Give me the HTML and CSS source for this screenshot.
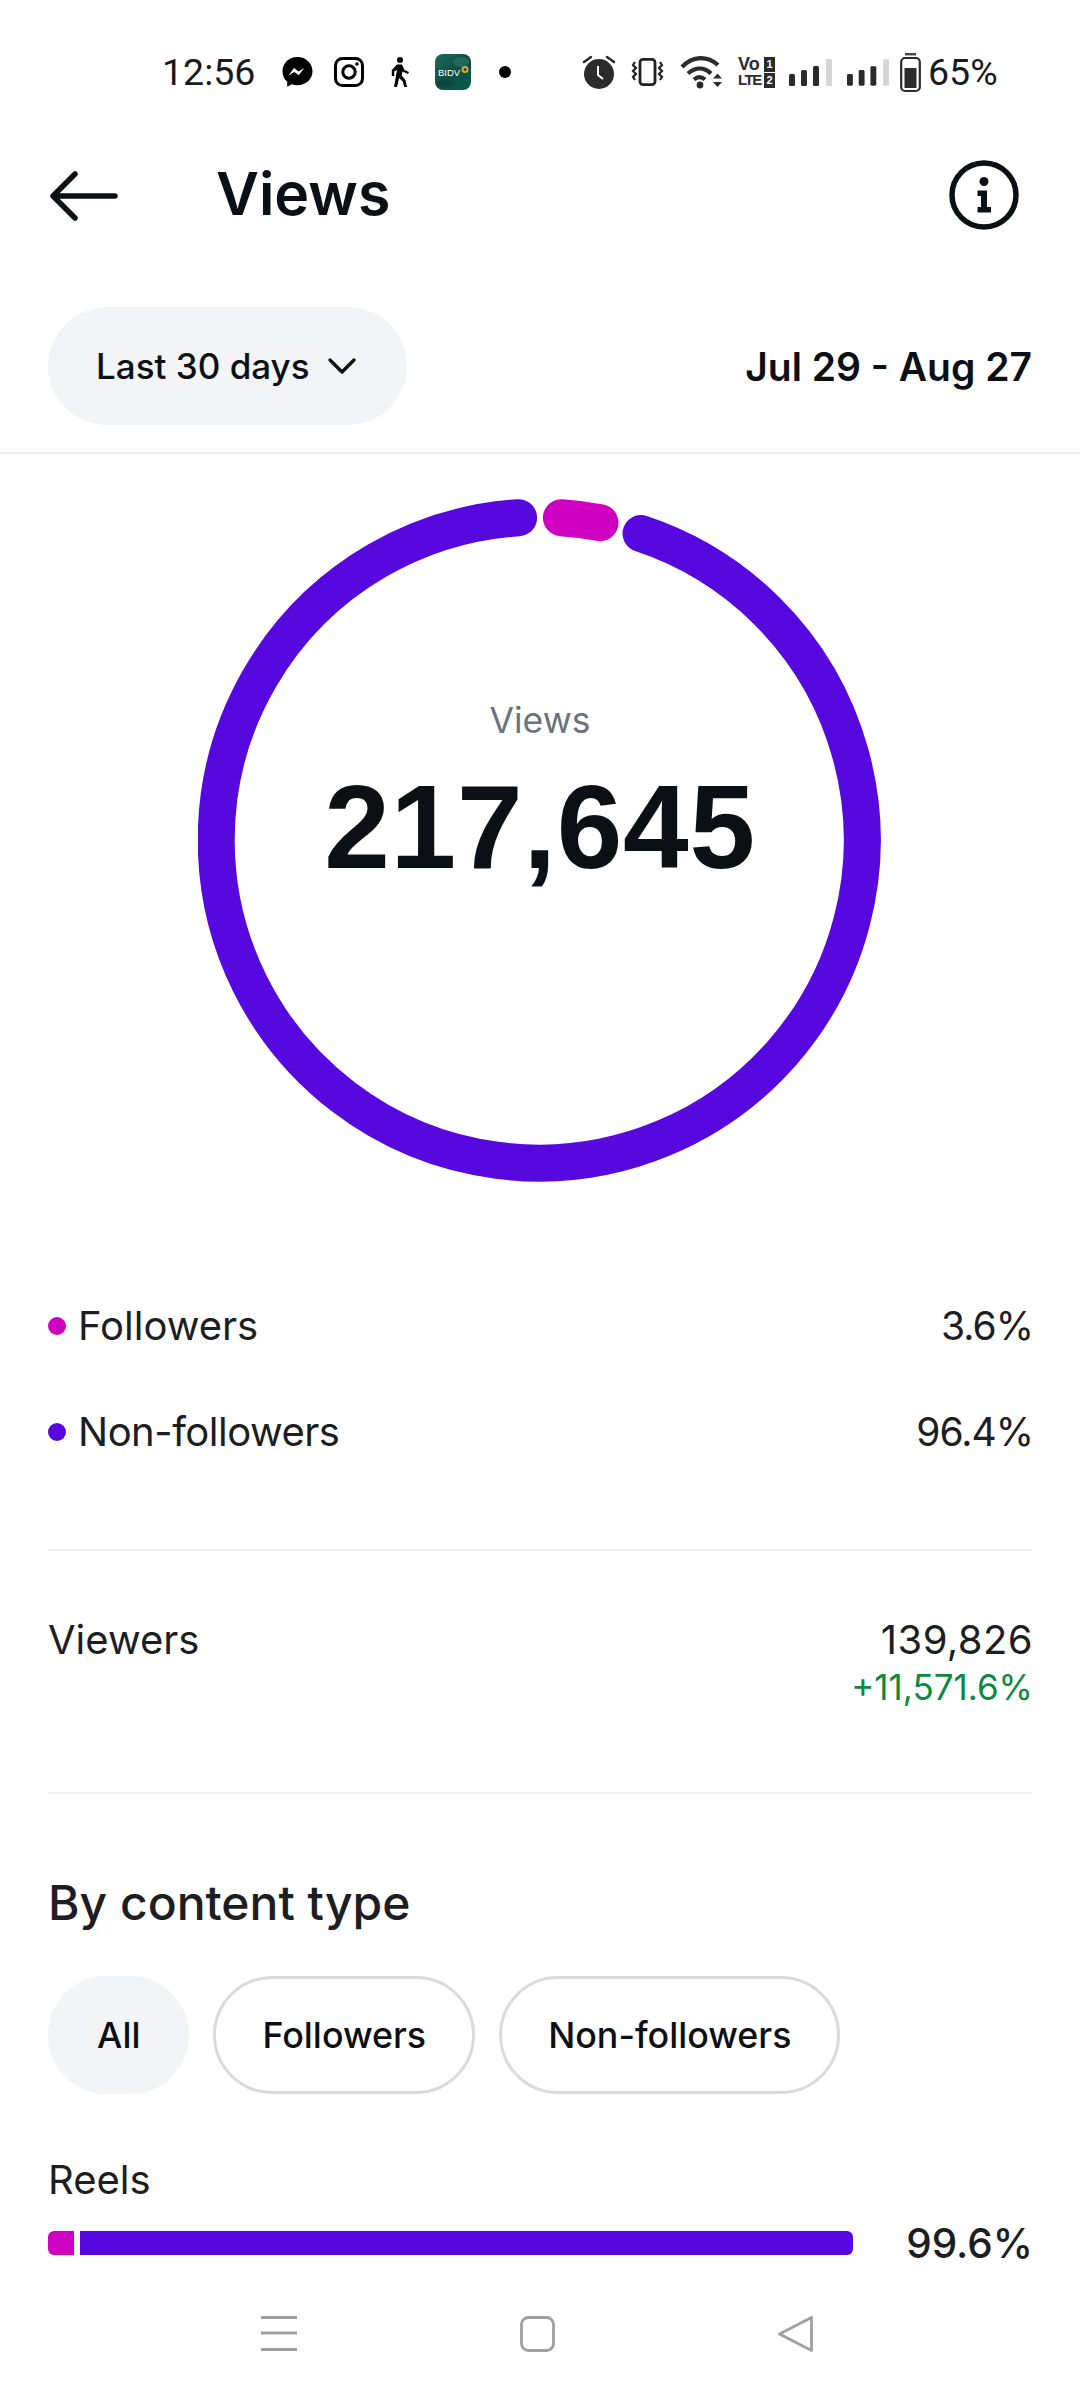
FILE: index.html
```html
<!doctype html>
<html lang="en">
<head>
    <meta charset="UTF-8">
    <meta name="viewport" content="width=device-width, initial-scale=1.0">
    <title>Views</title>
    <link rel="stylesheet" href="styles.css">
</head>
<body>
<div class="page">
    <div class="status-bar">
        <span class="status-text time">12:56</span>
        <svg class="ic-messenger" width="31" height="30" viewBox="0 0 31 30">
            <path d="M15.500 0C7 0 .5 6.200 .5 14.300c0 4.300 1.800 8 4.700 10.500v5l4.600-2.500c1.800.6 3.700.9 5.700.9 8.500 0 15-6 15-13.900S24 0 15.500 0z" fill="#000"/>
            <path d="M6.500 18.500l5.500-7.500 4.500 3.400 5.800-3.400-5.500 7.300-4.500-3.400z" fill="#fff"/>
        </svg>
        <svg class="ic-insta" width="30" height="30" viewBox="0 0 30 30" fill="none" stroke="#000">
            <rect x="1.500" y="1.500" width="27" height="27" rx="7" stroke-width="3"/>
            <circle cx="15" cy="15" r="6.200" stroke-width="3"/>
            <circle cx="23" cy="7" r="1.800" fill="#000" stroke="none"/>
        </svg>
        <svg class="ic-walk" width="19" height="30" viewBox="0 0 19 30">
            <circle cx="9" cy="3" r="3" fill="#000"/>
            <path d="M6 7.500h5l2.500 5.500 4.500 2-1 2-5.500-2.500-.8 4 3.800 4.500L16 30h-2.800l-1.500-5.500-3.500-3.500L6 30H3l3-17-2.800 1.500V19H.8v-6z" fill="#000"/>
        </svg>
        <svg class="ic-bidv" width="36" height="36" viewBox="0 0 36 36">
            <defs>
                <linearGradient id="bidvBg" x1="0" y1="0" x2="1" y2="1">
                    <stop offset="0" stop-color="#1c6a5c"/>
                    <stop offset="0.5" stop-color="#0e4f45"/>
                    <stop offset="1" stop-color="#0a5a4c"/>
                </linearGradient>
            </defs>
            <rect width="36" height="36" rx="8" fill="url(#bidvBg)"/>
            <ellipse cx="26" cy="8" rx="8" ry="5" fill="#2a7a68" opacity="0.6"/>
            <ellipse cx="10" cy="29" rx="8" ry="4" fill="#08443a" opacity="0.7"/>
            <text class="bidv-text" x="3" y="22">BIDV</text>
            <circle cx="30" cy="15.500" r="2.500" fill="none" stroke="#d8a92c" stroke-width="2"/>
        </svg>
        <span class="status-dot"></span>
        <span class="status-gap"></span>
        <svg class="ic-alarm" width="32" height="34" viewBox="0 0 32 34">
            <circle cx="16" cy="19" r="15" fill="#2b2b2b"/>
            <path d="M1 7l7-5M31 7l-7-5" stroke="#2b2b2b" stroke-width="2.500" stroke-linecap="round"/>
            <path d="M15 11v9l5 4" fill="none" stroke="#fff" stroke-width="2"/>
        </svg>
        <svg class="ic-vibrate" width="31" height="28" viewBox="0 0 31 28" fill="none" stroke="#222">
            <rect x="8" y="1.400" width="15" height="25.200" rx="3" stroke-width="2.800"/>
            <path d="M3 4l-2 3 3 3-3 3 3 3-3 3 2 3M28 4l2 3-3 3 3 3-3 3 3 3-2 3" stroke-width="2.200"/>
        </svg>
        <svg class="ic-wifi" width="42" height="33" viewBox="0 0 42 33" fill="none" stroke="#2b2b2b" stroke-width="4.200">
            <path d="M2 11C13-.5 27-.5 38 9"/>
            <path d="M8 17.500c7.500-6.500 16-6.500 23 0"/>
            <path d="M14 23.500c3.500-3 7.500-3 11 0"/>
            <circle cx="20" cy="29" r="3.400" fill="#2b2b2b" stroke="none"/>
            <path d="M33 22.500l4.500-5 4.500 5zM33 26h9l-4.500 5z" fill="#2b2b2b" stroke="none"/>
        </svg>
        <div class="volte">
            <div class="volte-labels">
                <span class="volte-vo">Vo</span>
                <span class="volte-lte">LTE</span>
            </div>
            <div class="volte-slots">
                <span>1</span>
                <span>2</span>
            </div>
        </div>
        <svg class="ic-signal" width="43" height="27" viewBox="0 0 43 27">
            <rect x="0" y="15" width="6" height="12" rx="1.500" fill="#2b2b2b"/>
            <rect x="12" y="11" width="6" height="16" rx="1.500" fill="#2b2b2b"/>
            <rect x="24" y="7" width="6" height="20" rx="1.500" fill="#2b2b2b"/>
            <rect x="37" y="0" width="6" height="27" fill="#d6d6d6"/>
        </svg>
        <svg class="ic-signal-2" width="42" height="27" viewBox="0 0 43 27">
            <rect x="0" y="15" width="6" height="12" rx="1.500" fill="#2b2b2b"/>
            <rect x="12" y="11" width="6" height="16" rx="1.500" fill="#2b2b2b"/>
            <rect x="24" y="7" width="6" height="20" rx="1.500" fill="#2b2b2b"/>
            <rect x="37" y="0" width="6" height="27" fill="#d6d6d6"/>
        </svg>
        <svg class="ic-battery" width="21" height="39" viewBox="0 0 21 39">
            <rect x="5" y="0" width="11" height="2.400" fill="#444"/>
            <rect x="1.200" y="5" width="18.600" height="33" rx="4" fill="none" stroke="#2b2b2b" stroke-width="2.200"/>
            <rect x="4.500" y="15" width="12" height="20" fill="#2b2b2b"/>
        </svg>
        <span class="status-text pct">65%</span>
    </div>

    <header class="app-bar">
        <svg class="back" width="68" height="50" viewBox="0 0 68 50" fill="none" stroke="#0c1014" stroke-width="5.500" stroke-linecap="round" stroke-linejoin="round">
            <path d="M65 25H4M25 3L3 25l22 22"/>
        </svg>
        <h1 class="title">Views</h1>
        <svg class="info" width="70" height="70" viewBox="0 0 70 70">
            <circle cx="35" cy="35" r="32" fill="none" stroke="#0c1014" stroke-width="5.500"/>
            <circle cx="35" cy="21.500" r="4.500" fill="#0c1014"/>
            <path d="M28.500 30.500H38V47h4v5.500H28.500V47H32V36h-3.500z" fill="#0c1014"/>
        </svg>
    </header>

    <div class="range-row">
        <div class="pill">
            <span>Last 30 days</span>
            <svg width="30" height="18" viewBox="0 0 30 18" fill="none" stroke="#0c1014" stroke-width="3.400" stroke-linecap="round" stroke-linejoin="round">
                <path d="M3 3l12 12 12-12"/>
            </svg>
        </div>
        <div class="dates">Jul 29 - Aug 27</div>
    </div>

    <main class="content">
        <div class="donut">
            <svg class="donut-svg" width="684" height="684" viewBox="0 0 684 684" fill="none" stroke-width="37" stroke-linecap="round">
                <path d="M320.600 19.700A323 323 0 1 0 443 35.500" stroke="#5708de"/>
                <path d="M363.400 19.700A323 323 0 0 1 402 24.700" stroke="#cf00c2"/>
            </svg>
            <div class="donut-label">
                <div class="donut-name">Views</div>
                <div class="donut-value">217,645</div>
            </div>
        </div>

        <section class="legend">
            <div class="row">
                <div class="row-name"><span class="dot dot-pink"></span>Followers</div>
                <div class="row-num">3.6%</div>
            </div>
            <div class="row">
                <div class="row-name row-name-tight"><span class="dot dot-blue"></span>Non-followers</div>
                <div class="row-num">96.4%</div>
            </div>
        </section>

        <section class="viewers">
            <div>Viewers</div>
            <div class="viewers-nums">
                <div class="viewers-total">139,826</div>
                <div class="delta">+11,571.6%</div>
            </div>
        </section>

        <section class="by-type">
            <h2>By content type</h2>
            <div class="chips">
                <div class="chip chip-active">All</div>
                <div class="chip">Followers</div>
                <div class="chip">Non-followers</div>
            </div>
            <div class="type-name">Reels</div>
            <div class="bar-row">
                <div class="bar">
                    <div class="bar-pink"></div>
                    <div class="bar-blue"></div>
                </div>
                <div class="bar-pct">99.6%</div>
            </div>
        </section>
    </main>

    <nav class="nav-bar">
        <svg width="36" height="36" viewBox="0 0 36 36" fill="#a0a0a0">
            <rect y="0" width="36" height="3"/>
            <rect y="15.500" width="36" height="3"/>
            <rect y="32" width="36" height="3"/>
        </svg>
        <svg width="35" height="36" viewBox="0 0 35 36" fill="none" stroke="#a0a0a0" stroke-width="2.800">
            <rect x="1.500" y="1.500" width="32" height="33" rx="7"/>
        </svg>
        <svg width="35" height="36" viewBox="0 0 35 36" fill="none" stroke="#a0a0a0" stroke-width="2.800" stroke-linejoin="round">
            <path d="M33.500 1.500v33L1.500 18z"/>
        </svg>
    </nav>
</div>
</body>
</html>
```

FILE: styles.css
```css
* {
    margin: 0;
    padding: 0;
    box-sizing: border-box;
}

html,
body {
    width: 100%;
    height: 100%;
}

body {
    background: #fff;
    color: #1c1e21;
    font-family: "Inter", "Liberation Sans", sans-serif;
}

.page {
    display: flex;
    flex-direction: column;
    width: 1080px;
    height: 2400px;
    overflow: hidden;
}

/* status bar */
.status-bar {
    display: flex;
    align-items: center;
    flex-shrink: 0;
    height: 144px;
    padding-left: 162px;
}

.status-bar svg {
    overflow: visible;
}

.status-text {
    font-family: "Roboto", sans-serif;
    font-size: 37.500px;
    color: #1a1a1a;
}

.time {
    width: 94px;
}

.ic-messenger {
    margin-left: 26px;
}

.ic-insta {
    margin-left: 21px;
}

.ic-walk {
    margin-left: 27px;
}

.ic-bidv {
    margin-left: 25px;
}

.bidv-text {
    font-family: "Liberation Sans", sans-serif;
    font-size: 9.500px;
    fill: #fff;
}

.status-dot {
    width: 12px;
    height: 12px;
    margin-left: 28px;
    border-radius: 50%;
    background: #000;
}

.status-gap {
    width: 72px;
}

.ic-vibrate {
    margin-left: 17px;
}

.ic-wifi {
    margin-left: 17px;
}

.volte {
    display: flex;
    justify-content: space-between;
    width: 37px;
    margin-left: 16px;
    font-family: "Liberation Sans", sans-serif;
    font-weight: 700;
    color: #2b2b2b;
}

.volte-labels {
    display: flex;
    flex-direction: column;
    font-size: 15px;
    line-height: 15px;
}

.volte-vo {
    font-size: 18px;
}

.volte-lte {
    letter-spacing: -1.500px;
}

.volte-slots {
    display: flex;
    flex-direction: column;
    gap: 1px;
    width: 11px;
    font-size: 11px;
    line-height: 15px;
    text-align: center;
    color: #fff;
}

.volte-slots span {
    background: #2b2b2b;
}

.ic-signal {
    margin-left: 14px;
}

.ic-signal-2 {
    margin-left: 15px;
}

.ic-battery {
    margin-left: 11px;
}

.pct {
    margin-left: 7px;
}

/* top bar */
.app-bar {
    display: flex;
    align-items: center;
    flex-shrink: 0;
    height: 104px;
    padding: 0 61px 0 50px;
}

.title {
    flex: 1;
    margin-left: 98px;
    padding-bottom: 6px;
    font-size: 59px;
    font-weight: 600;
    color: #0c1014;
}

.info {
    margin-bottom: 2px;
}

.range-row {
    display: flex;
    align-items: center;
    justify-content: space-between;
    flex-shrink: 0;
    height: 206px;
    padding: 59px 48px 27px;
    border-bottom: 2px solid #efeff1;
}

.pill {
    display: flex;
    align-items: center;
    gap: 17px;
    height: 118px;
    padding: 0 50px 0 48px;
    border-radius: 59px;
    background: #f3f4f6;
    font-size: 35px;
    font-weight: 500;
    color: #0c1014;
}

.dates {
    font-size: 39px;
    font-weight: 600;
    color: #0c1014;
}

/* everything below the date row */
.content {
    flex: 1;
    padding: 44px 48px 0;
}

.donut {
    display: grid;
    justify-items: center;
    align-items: center;
}

.donut-svg,
.donut-label {
    grid-area: 1 / 1;
}

.donut-label {
    padding-bottom: 90px;
    text-align: center;
}

.donut-name {
    margin-bottom: 20px;
    font-size: 35.500px;
    line-height: 43px;
    color: #6b7280;
}

.donut-value {
    font-family: "Liberation Sans", sans-serif;
    font-size: 118px;
    font-weight: 700;
    line-height: 130px;
    letter-spacing: 0.700px;
    color: #0c1014;
}

.legend {
    display: flex;
    flex-direction: column;
    gap: 58px;
    padding: 120px 0 93px;
    border-bottom: 2px solid #efeff1;
}

.row {
    display: flex;
    justify-content: space-between;
    height: 48px;
    font-size: 40px;
    line-height: 48px;
}

.row-name {
    display: flex;
    align-items: center;
}

.row-name-tight {
    letter-spacing: -0.5px;
}

.row-num {
    margin-right: -1px;
    font-size: 39px;
    letter-spacing: -1px;
}

.dot {
    width: 18px;
    height: 18px;
    margin-right: 12px;
    border-radius: 50%;
}

.dot-pink {
    background: #cf00c2;
}

.dot-blue {
    background: #5708de;
}

.viewers {
    display: flex;
    justify-content: space-between;
    height: 243px;
    padding-top: 65px;
    border-bottom: 2px solid #efeff1;
    font-size: 40px;
    line-height: 48px;
}

.viewers-nums {
    margin-right: -1px;
    text-align: right;
}

.viewers-total {
    letter-spacing: 0.4px;
}

.delta {
    font-size: 35px;
    line-height: 46px;
    color: #0a8a3f;
}

.by-type h2 {
    margin-top: 78px;
    font-size: 48px;
    font-weight: 500;
    line-height: 62px;
    color: #1c1e21;
}

.chips {
    display: flex;
    gap: 24px;
    margin-top: 42px;
}

.chip {
    display: flex;
    align-items: center;
    height: 118px;
    padding: 0 46px;
    border: 3px solid #dbdbdb;
    border-radius: 59px;
    font-size: 35.800px;
    font-weight: 500;
    color: #0c1014;
}

.chip-active {
    border-color: #f3f4f6;
    background: #f3f4f6;
}

.type-name {
    margin-top: 62px;
    font-size: 40px;
    line-height: 48px;
}

.bar-row {
    display: flex;
    align-items: center;
    justify-content: space-between;
    height: 50px;
    margin-top: 14px;
}

.bar {
    display: flex;
    gap: 6px;
    width: 805px;
    height: 24px;
}

.bar-pink {
    width: 26px;
    border-radius: 6px 0 0 6px;
    background: #cf00c2;
}

.bar-blue {
    flex: 1;
    border-radius: 0 6px 6px 0;
    background: #5708de;
}

.bar-pct {
    margin-right: -1px;
    font-size: 40.500px;
    font-weight: 500;
}

/* android nav */
.nav-bar {
    position: absolute;
    top: 2316px;
    left: 261px;
    display: flex;
    justify-content: space-between;
    width: 552px;
}
```
